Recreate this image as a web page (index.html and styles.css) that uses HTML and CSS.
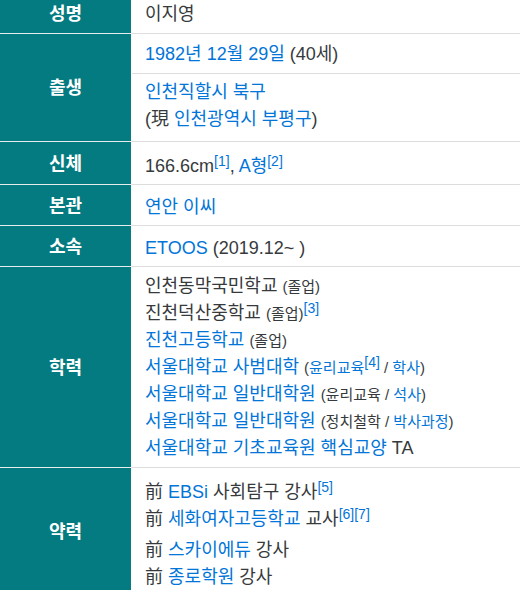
FILE: index.html
```html
<!DOCTYPE html>
<html lang="ko">
<head>
<meta charset="utf-8">
<link rel="stylesheet" href="styles.css">
</head>
<body>
<table class="info">
  <tbody>
    <tr><th>성명</th><td class="name">이지영</td></tr>
    <tr><th rowspan="2">출생</th><td class="born">
      <a>1982년</a> <a>12월 29일</a> (40세)</td></tr>
    <tr><td class="place"><a>인천직할시 북구</a><br>(現 <a>인천광역시 부평구</a>)</td></tr>
    <tr><th>신체</th><td class="body">166.6cm<sup>[1]</sup>, <a>A형</a><sup>[2]</sup></td></tr>
    <tr><th>본관</th><td><a>연안 이씨</a></td></tr>
    <tr><th>소속</th><td><a>ETOOS</a> (2019.12~ )</td></tr>
    <tr><th>학력</th><td class="list">
      <div>인천동막국민학교 <small>(졸업)</small></div>
      <div>진천덕산중학교 <small>(졸업)</small><sup>[3]</sup></div>
      <div><a>진천고등학교</a> <small>(졸업)</small></div>
      <div><a>서울대학교 사범대학</a> <small>(<a>윤리교육</a><sup>[4]</sup> / <a>학사</a>)</small></div>
      <div><a>서울대학교 일반대학원</a> <small>(윤리교육 / <a>석사</a>)</small></div>
      <div><a>서울대학교 일반대학원</a> <small>(정치철학 / <a>박사과정</a>)</small></div>
      <div><a>서울대학교 기초교육원 핵심교양</a> TA</div>
    </td></tr>
    <tr><th>약력</th><td class="list career">
      <div>前 <a>EBSi</a> 사회탐구 강사<sup>[5]</sup></div>
      <div class="tall">前 <a>세화여자고등학교</a> 교사<sup>[6]</sup><sup>[7]</sup></div>
      <div>前 <a>스카이에듀</a> 강사</div>
      <div>前 <a>종로학원</a> 강사</div>
    </td></tr>
  </tbody>
</table>
</body>
</html>
```

FILE: styles.css
```css
html, body {
  margin: 0;
  padding: 0;
  background: #fff;
}

body {
  font-family: "Liberation Sans", "Noto Sans CJK KR", sans-serif;
  font-size: 18px;
  color: #373a3c;
}

.info {
  width: 520px;
  margin-top: -7px;
  border-collapse: collapse;
  table-layout: fixed;
}

.info th {
  width: 131px;
  padding: 2px 0 0;
  background: #047b80;
  color: #fff;
  font-weight: bold;
  text-align: center;
  vertical-align: middle;
  border-bottom: 1px solid #e6eded;
  border-right: 1px solid #fff;
  line-height: 27px;
}

.info td {
  padding: 9px 10px 4px 13px;
  line-height: 27px;
  vertical-align: middle;
  border-bottom: 1px solid #dddddd;
}

.info td.name {
  padding-top: 8px;
  padding-bottom: 5px;
}

.info td.born {
  padding-top: 7px;
  padding-bottom: 5px;
}

.info td.place {
  padding-top: 5px;
  padding-bottom: 8px;
}

.info td.body {
  padding-top: 11px;
  padding-bottom: 4px;
}

.info td.list {
  padding-top: 6px;
  padding-bottom: 5px;
}

.info td.career {
  padding-top: 11px;
  padding-bottom: 3px;
}

.career .tall {
  margin-bottom: 4px;
}

a {
  color: #0275d8;
  text-decoration: none;
}

small {
  font-size: 15px;
  line-height: 1;
}

sup {
  font-size: 14px;
  line-height: 0;
  vertical-align: 6px;
  color: #0275d8;
}
```
